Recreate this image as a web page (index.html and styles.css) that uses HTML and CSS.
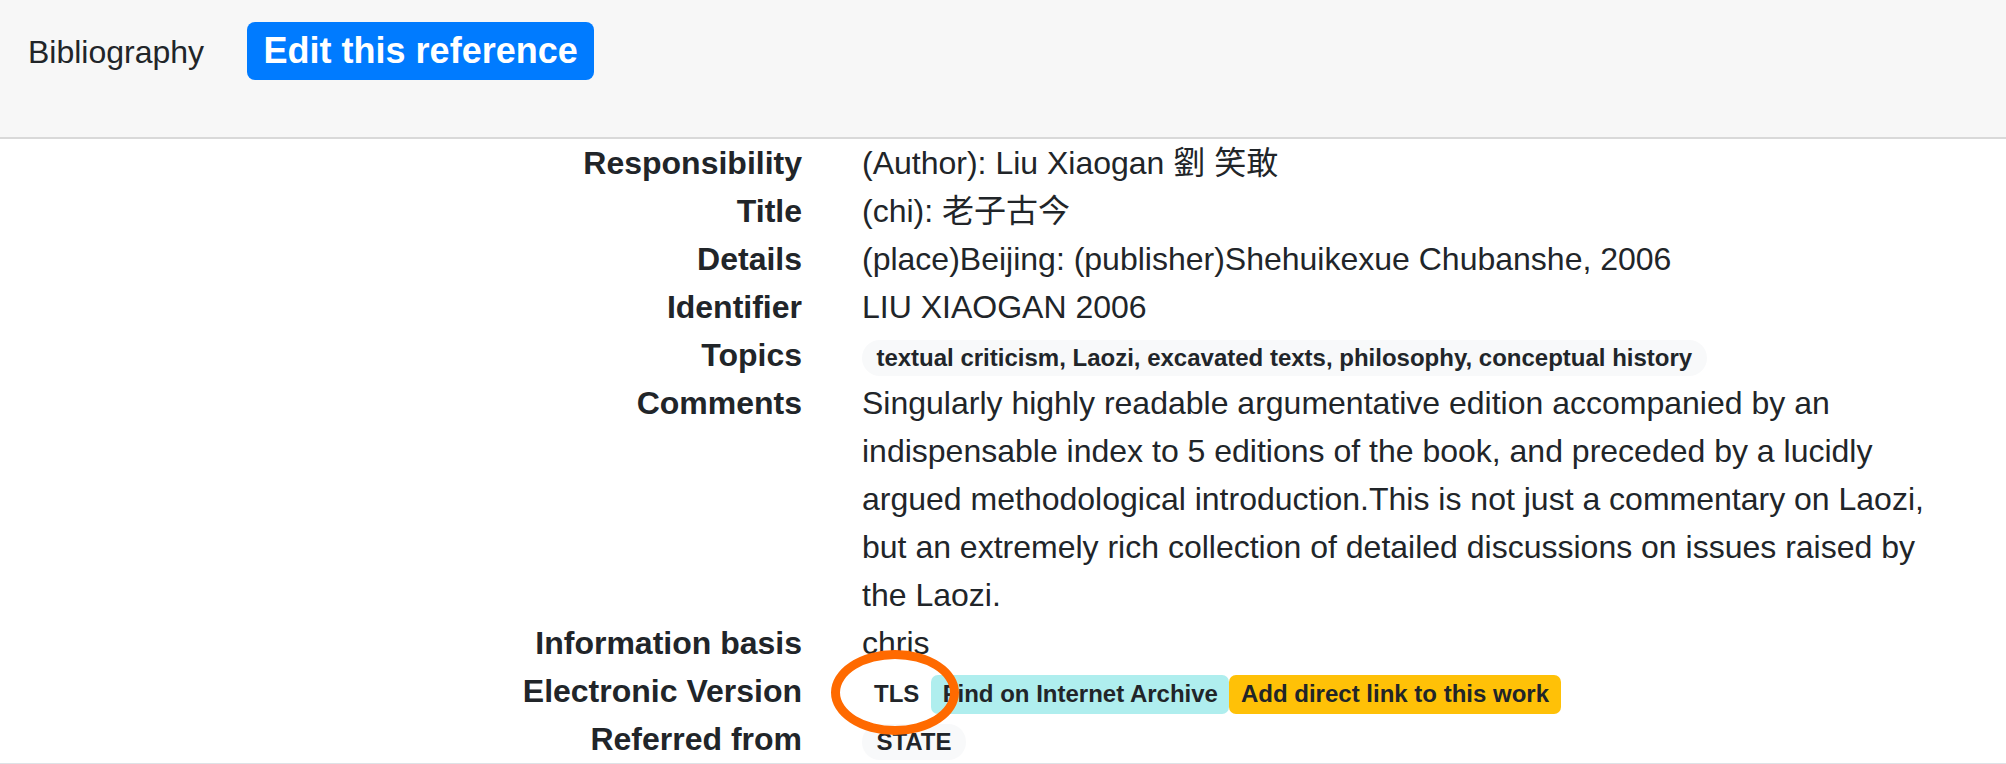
FILE: index.html
```html
<!DOCTYPE html>
<html lang="en">
<head>
<meta charset="utf-8">
<title>Bibliography</title>
<link rel="stylesheet" href="styles.css">
</head>
<body>
<header class="navbar">
  <span class="brand">Bibliography</span>
  <a class="btn-edit">Edit this reference</a>
</header>
<main class="record">
  <div class="label">Responsibility</div>
  <div class="value">(Author): Liu Xiaogan 劉 笑敢</div>
  <div class="label">Title</div>
  <div class="value">(chi): 老子古今</div>
  <div class="label">Details</div>
  <div class="value">(place)Beijing: (publisher)Shehuikexue Chubanshe, 2006</div>
  <div class="label">Identifier</div>
  <div class="value">LIU XIAOGAN 2006</div>
  <div class="label">Topics</div>
  <div class="value"><span class="badge pill">textual criticism, Laozi, excavated texts, philosophy, conceptual history</span></div>
  <div class="label">Comments</div>
  <div class="value">Singularly highly readable argumentative edition accompanied by an indispensable index to 5 editions of the book, and preceded by a lucidly argued methodological introduction.This is not just a commentary on Laozi, but an extremely rich collection of detailed discussions on issues raised by the Laozi.</div>
  <div class="label">Information basis</div>
  <div class="value">chris</div>
  <div class="label">Electronic Version</div>
  <div class="value"><span class="badge tag tls">TLS<span class="mark"></span></span><span class="badge tag archive">Find on Internet Archive</span><span class="badge tag addlink">Add direct link to this work</span></div>
  <div class="label">Referred from</div>
  <div class="value"><span class="badge pill">STATE</span></div>
</main>
<footer class="foot"></footer>
</body>
</html>
```

FILE: styles.css
```css
html, body {
  margin: 0;
  padding: 0;
  background: #ffffff;
}

body {
  font-family: "Liberation Sans", "Noto Sans CJK SC", sans-serif;
  font-size: 32px;
  line-height: 1.5;
  color: #212529;
}

.navbar {
  box-sizing: border-box;
  height: 139px;
  display: flex;
  align-items: baseline;
  padding: 22px 0 0 28px;
  background: #f7f7f7;
  border-bottom: 2px solid #d9d9d9;
}

.brand {
  font-size: 32px;
  line-height: 48px;
  margin-right: 43px;
}

.btn-edit {
  display: inline-block;
  font-size: 36px;
  font-weight: 700;
  line-height: 58px;
  padding: 0 16.5px;
  color: #ffffff;
  background: #007bff;
  border-radius: 8px;
}

.record {
  display: grid;
  grid-template-columns: 802px 1fr;
  column-gap: 60px;
  padding-right: 60px;
}

.label {
  font-weight: 700;
  text-align: right;
}

.badge {
  display: inline-block;
  font-size: 24px;
  font-weight: 700;
  line-height: 1;
  white-space: nowrap;
  color: #212529;
}

.pill {
  padding: 6px 14.4px;
  border-radius: 10em;
  background: #f8f9fa;
}

.tag {
  padding: 7.5px 11.5px;
  border-radius: 7px;
}

.tls {
  position: relative;
  padding-left: 12px;
  padding-right: 12px;
}

.archive {
  background: #afeeee;
}

.addlink {
  background: #ffc107;
}

.mark {
  position: absolute;
  left: -31px;
  top: -25px;
  width: 128px;
  height: 85px;
  box-sizing: border-box;
  border: 9px solid #ff6a00;
  border-radius: 50%;
  pointer-events: none;
}

.foot {
  border-top: 1px solid #dee2e6;
  height: 0;
}
```
